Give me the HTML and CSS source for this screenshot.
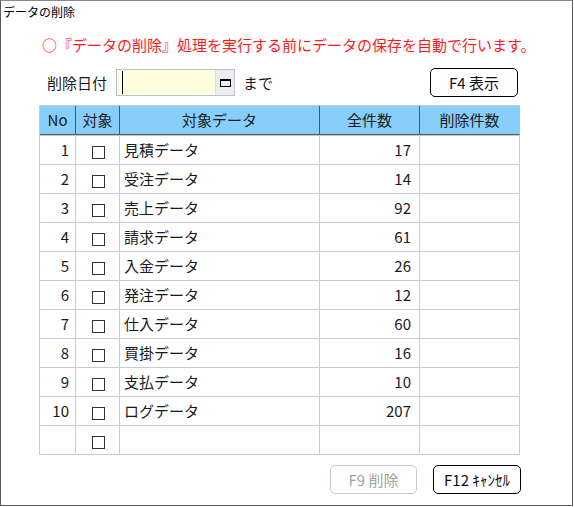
FILE: index.html
```html
<!DOCTYPE html>
<html lang="ja">
<head>
  <meta charset="UTF-8">
  <title>データの削除</title>
  <link rel="stylesheet" href="styles.css">
</head>
<body>

<div class="window">
  <div class="title">データの削除</div>

  <p class="notice">○『データの削除』処理を実行する前にデータの保存を自動で行います。</p>

  <div class="toolbar">
    <span class="label">削除日付</span>
    <div class="datebox">
      <div class="date-input"><span class="caret"></span></div>
      <a href="javascript:void(0);" class="date-btn"><span class="cal"></span></a>
    </div>
    <span class="until">まで</span>
    <a href="javascript:void(0);" class="btn toolbar-btn">F4 表示</a>
  </div>

  <table class="grid">
    <thead>
      <tr>
        <th class="c-no">No</th>
        <th class="c-chk">対象</th>
        <th class="c-name">対象データ</th>
        <th class="c-total">全件数</th>
        <th class="c-del">削除件数</th>
      </tr>
    </thead>
    <tbody>
      <tr><td class="num">1</td><td class="chk"><span class="box"></span></td><td class="name">見積データ</td><td class="num total">17</td><td></td></tr>
      <tr><td class="num">2</td><td class="chk"><span class="box"></span></td><td class="name">受注データ</td><td class="num total">14</td><td></td></tr>
      <tr><td class="num">3</td><td class="chk"><span class="box"></span></td><td class="name">売上データ</td><td class="num total">92</td><td></td></tr>
      <tr><td class="num">4</td><td class="chk"><span class="box"></span></td><td class="name">請求データ</td><td class="num total">61</td><td></td></tr>
      <tr><td class="num">5</td><td class="chk"><span class="box"></span></td><td class="name">入金データ</td><td class="num total">26</td><td></td></tr>
      <tr><td class="num">6</td><td class="chk"><span class="box"></span></td><td class="name">発注データ</td><td class="num total">12</td><td></td></tr>
      <tr><td class="num">7</td><td class="chk"><span class="box"></span></td><td class="name">仕入データ</td><td class="num total">60</td><td></td></tr>
      <tr><td class="num">8</td><td class="chk"><span class="box"></span></td><td class="name">買掛データ</td><td class="num total">16</td><td></td></tr>
      <tr><td class="num">9</td><td class="chk"><span class="box"></span></td><td class="name">支払データ</td><td class="num total">10</td><td></td></tr>
      <tr><td class="num">10</td><td class="chk"><span class="box"></span></td><td class="name">ログデータ</td><td class="num total">207</td><td></td></tr>
      <tr><td class="num"></td><td class="chk"><span class="box"></span></td><td class="name"></td><td class="num total"></td><td></td></tr>
    </tbody>
  </table>

  <div class="footer">
    <a href="javascript:void(0);" class="btn disabled">F9 削除</a>
    <a href="javascript:void(0);" class="btn">F12 ｷｬﾝｾﾙ</a>
  </div>
</div>

</body>
</html>
```

FILE: styles.css
```css
* {
  margin: 0;
  padding: 0;
  box-sizing: border-box;
}

body {
  font-family: "Noto Sans CJK JP", "Noto Sans", sans-serif;
  color: #1a1a1a;
  background-color: #fff;
}

.window {
  width: 573px;
  height: 506px;
  border: 1px solid #5a5a5a;
  border-top-color: #8a8a8a;
}

.title {
  padding: 3px 0 0 2px;
  height: 19px;
  font-size: 12px;
  line-height: 16px;
  color: #000;
}

.notice {
  margin-top: 15px;
  padding-left: 41px;
  font-size: 15px;
  line-height: 20px;
  color: #ff1a1a;
  white-space: nowrap;
}

/* 日付と表示ボタン */
.toolbar {
  display: flex;
  align-items: center;
  margin-top: 13px;
  padding: 0 54px 0 46px;
  height: 29px;
  font-size: 15px;
}

.label {
  line-height: 20px;
}

.datebox {
  display: flex;
  width: 119px;
  height: 27px;
  margin-left: 9px;
  border: 1px solid #b8c2ce;
}

.date-input {
  flex: 1;
  background-color: #fefde0;
  position: relative;
}

.caret {
  position: absolute;
  left: 5px;
  top: 1px;
  width: 1px;
  height: 23px;
  background-color: #000;
}

.date-btn {
  width: 19px;
  display: flex;
  align-items: center;
  justify-content: center;
  background-color: #ededed;
  border-left: 1px solid #dcdcdc;
}

.cal {
  width: 11px;
  height: 8px;
  border: 1px solid #000;
  border-top-width: 2px;
}

.until {
  margin-left: 8px;
  line-height: 20px;
}

.btn {
  display: flex;
  align-items: center;
  justify-content: center;
  width: 88px;
  height: 29px;
  border: 1px solid #000;
  border-radius: 5px;
  font-size: 15px;
  color: #111;
  text-decoration: none;
  background-color: #fff;
}

.toolbar-btn {
  margin-left: auto;
}

.btn.disabled {
  width: 87px;
  border-color: #c3ccd7;
  color: #a3a3a3;
}

/* 一覧 */
.grid {
  margin: 8px 0 0 38px;
  width: 481px;
  table-layout: fixed;
  border-collapse: separate;
  border-spacing: 0;
  border-left: 1px solid #c4ccd8;
  border-top: 1px solid #c4ccd8;
  font-size: 15px;
}

.grid th {
  height: 29px;
  padding: 0;
  font-weight: normal;
  color: #1a1a1a;
  background-color: #87cefa;
  border-right: 1px solid #555;
  border-bottom: 1px solid #555;
  line-height: 20px;
}

.grid th:last-child {
  border-right-color: #87cefa;
}

.c-no { width: 36px; }
.c-chk { width: 44px; }
.c-name { width: 200px; }
.c-total { width: 100px; }
.c-del { width: 100px; }

.grid td {
  height: 29px;
  padding: 0;
  border-right: 1px solid #c4ccd8;
  border-bottom: 1px solid #c4ccd8;
  line-height: 20px;
  white-space: nowrap;
}

.grid tbody tr:first-child td {
  height: 30px;
  box-shadow: inset 0 1px #c4ccd8;
  padding-top: 1px;
}

.grid td.num {
  text-align: right;
  padding-right: 6px;
}

.grid td.total {
  padding-right: 8px;
}

.grid td.name {
  padding-left: 4px;
}

.grid td.chk {
  text-align: center;
}

.box {
  display: inline-block;
  width: 13px;
  height: 13px;
  border: 1px solid #333;
  vertical-align: -3px;
  margin-left: 1px;
}

.footer {
  display: flex;
  justify-content: flex-end;
  gap: 16px;
  margin-top: 10px;
  padding-right: 51px;
}
```
